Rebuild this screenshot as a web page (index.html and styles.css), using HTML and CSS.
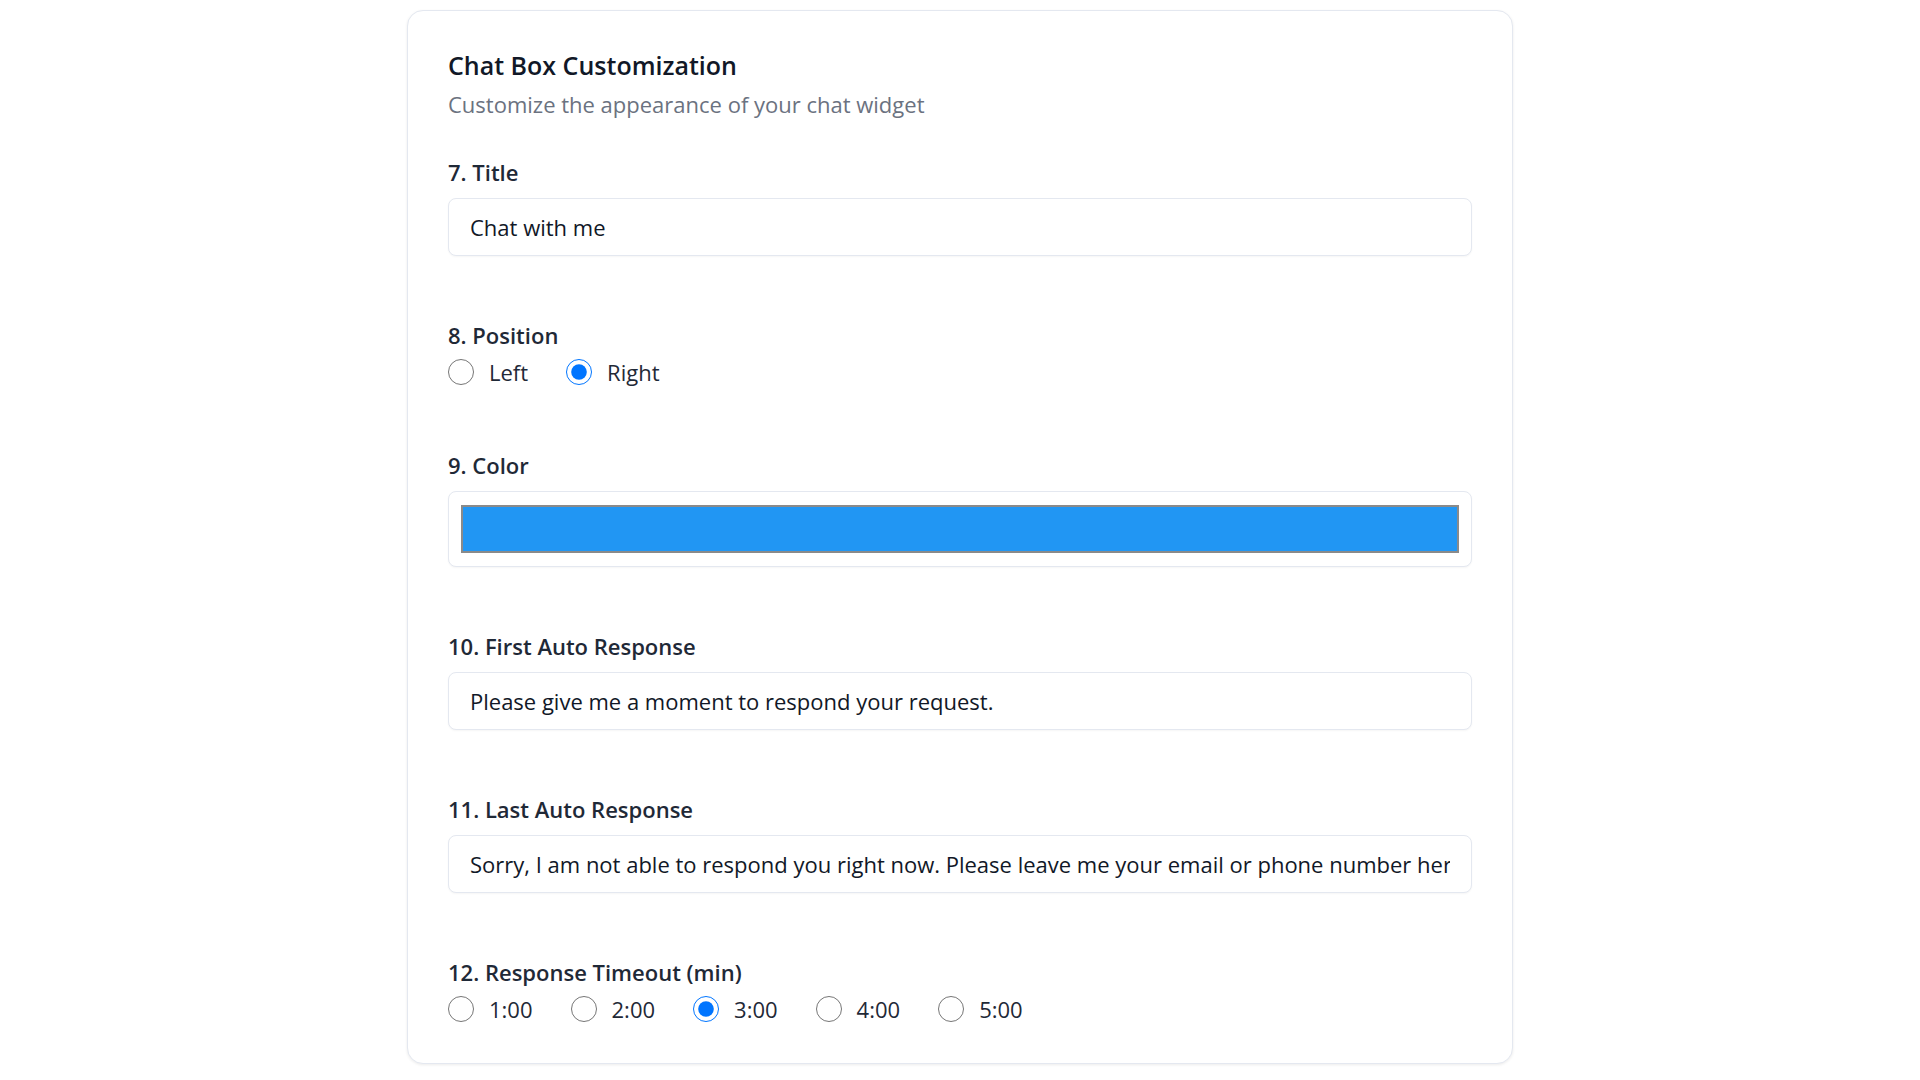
FILE: index.html
```html
<!DOCTYPE html>
<html lang="en">
<head>
    <meta charset="UTF-8">
    <meta name="viewport" content="width=device-width, initial-scale=1.0">
    <title>Chat Box Customization</title>
    <link rel="stylesheet" href="styles.css">
</head>
<body>
    <div class="card">
        <div class="card-header">
            <h2>Chat Box Customization</h2>
            <p class="subtitle">Customize the appearance of your chat widget</p>
        </div>

        <div class="field">
            <label class="field-label" for="chatTitle">7. Title</label>
            <input type="text" id="chatTitle" class="text-input" value="Chat with me">
        </div>

        <div class="field">
            <span class="field-label tight">8. Position</span>
            <div class="radio-row">
                <label class="radio-option"><input type="radio" name="position" value="left"> Left</label>
                <label class="radio-option"><input type="radio" name="position" value="right" checked> Right</label>
            </div>
        </div>

        <div class="field">
            <label class="field-label" for="chatColor">9. Color</label>
            <input type="color" id="chatColor" class="color-input" value="#2196f3">
        </div>

        <div class="field">
            <label class="field-label" for="firstResponse">10. First Auto Response</label>
            <input type="text" id="firstResponse" class="text-input" value="Please give me a moment to respond your request.">
        </div>

        <div class="field">
            <label class="field-label" for="lastResponse">11. Last Auto Response</label>
            <input type="text" id="lastResponse" class="text-input" value="Sorry, I am not able to respond you right now. Please leave me your email or phone number here.">
        </div>

        <div class="field">
            <span class="field-label tight">12. Response Timeout (min)</span>
            <div class="radio-row">
                <label class="radio-option"><input type="radio" name="timeout" value="1"> 1:00</label>
                <label class="radio-option"><input type="radio" name="timeout" value="2"> 2:00</label>
                <label class="radio-option"><input type="radio" name="timeout" value="3" checked> 3:00</label>
                <label class="radio-option"><input type="radio" name="timeout" value="4"> 4:00</label>
                <label class="radio-option"><input type="radio" name="timeout" value="5"> 5:00</label>
            </div>
        </div>
    </div>
</body>
</html>
```

FILE: styles.css
```css
body {
    font-family: 'Open Sans', 'Noto Sans', sans-serif;
    background-color: #ffffff;
    color: #1f2937;
    margin: 0;
    padding: 10px 0 16px;
}
.card {
    width: 1106px;
    box-sizing: border-box;
    margin: 0 auto;
    padding: 40px;
    background-color: #ffffff;
    border: 1px solid #e4e8f0;
    border-radius: 16px;
    box-shadow: 0 1px 3px rgba(0,0,0,0.08);
}
.card-header {
    margin-bottom: 40px;
}
.card-header h2 {
    margin: 0;
    font-size: 25px;
    line-height: 28px;
    font-weight: 600;
    color: #111827;
}
.subtitle {
    margin: 11px 0 0;
    font-size: 22px;
    line-height: 28px;
    color: #6b7280;
}
.field + .field {
    margin-top: 65px;
}
.field-label {
    display: block;
    font-size: 22px;
    line-height: 28px;
    font-weight: 600;
    color: #1f2937;
    margin-bottom: 12px;
}
.field-label.tight {
    margin-bottom: 9px;
}
.text-input {
    display: block;
    width: 100%;
    box-sizing: border-box;
    height: 58px;
    padding: 0 21px;
    font-family: inherit;
    font-size: 22px;
    color: #111827;
    border: 1px solid #e4e8f0;
    border-radius: 8px;
    background: #ffffff;
    box-shadow: 0 1px 2px rgba(0,0,0,0.04);
}
.color-input {
    display: block;
    width: 100%;
    box-sizing: border-box;
    height: 76px;
    padding: 13px 12px;
    border: 1px solid #e4e8f0;
    border-radius: 8px;
    background: #ffffff;
    box-shadow: 0 1px 2px rgba(0,0,0,0.04);
    cursor: pointer;
}
.color-input::-webkit-color-swatch-wrapper {
    padding: 0;
}
.color-input::-webkit-color-swatch {
    border: 2px solid #8a8a8a;
    border-radius: 0;
}
.radio-row {
    display: flex;
    align-items: center;
    gap: 38px;
    height: 28px;
}
.radio-option {
    display: flex;
    align-items: center;
    gap: 15px;
    font-size: 22px;
    color: #1f2937;
    cursor: pointer;
}
.radio-option input {
    width: 26px;
    height: 26px;
    margin: 0;
}
```
